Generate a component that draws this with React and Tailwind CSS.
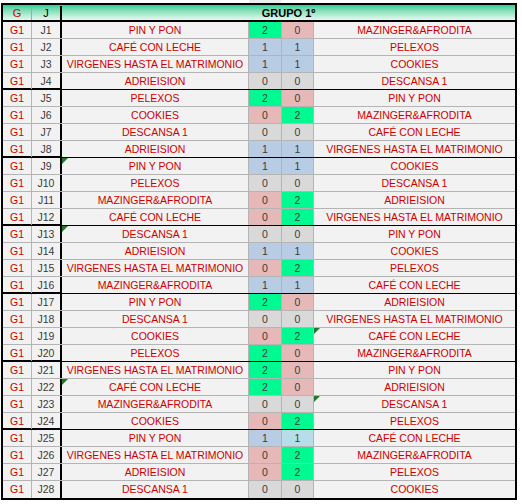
import React from "react";

const rows = [
  ["J1", "PIN Y PON", 2, 0, "MAZINGER&AFRODITA"],
  ["J2", "CAFÉ CON LECHE", 1, 1, "PELEXOS"],
  ["J3", "VIRGENES HASTA EL MATRIMONIO", 1, 1, "COOKIES"],
  ["J4", "ADRIEISION", 0, 0, "DESCANSA 1"],
  ["J5", "PELEXOS", 2, 0, "PIN Y PON"],
  ["J6", "COOKIES", 0, 2, "MAZINGER&AFRODITA"],
  ["J7", "DESCANSA 1", 0, 0, "CAFÉ CON LECHE"],
  ["J8", "ADRIEISION", 1, 1, "VIRGENES HASTA EL MATRIMONIO"],
  ["J9", "PIN Y PON", 1, 1, "COOKIES"],
  ["J10", "PELEXOS", 0, 0, "DESCANSA 1"],
  ["J11", "MAZINGER&AFRODITA", 0, 2, "ADRIEISION"],
  ["J12", "CAFÉ CON LECHE", 0, 2, "VIRGENES HASTA EL MATRIMONIO"],
  ["J13", "DESCANSA 1", 0, 0, "PIN Y PON"],
  ["J14", "ADRIEISION", 1, 1, "COOKIES"],
  ["J15", "VIRGENES HASTA EL MATRIMONIO", 0, 2, "PELEXOS"],
  ["J16", "MAZINGER&AFRODITA", 1, 1, "CAFÉ CON LECHE"],
  ["J17", "PIN Y PON", 2, 0, "ADRIEISION"],
  ["J18", "DESCANSA 1", 0, 0, "VIRGENES HASTA EL MATRIMONIO"],
  ["J19", "COOKIES", 0, 2, "CAFÉ CON LECHE"],
  ["J20", "PELEXOS", 2, 0, "MAZINGER&AFRODITA"],
  ["J21", "VIRGENES HASTA EL MATRIMONIO", 2, 0, "PIN Y PON"],
  ["J22", "CAFÉ CON LECHE", 2, 0, "ADRIEISION"],
  ["J23", "MAZINGER&AFRODITA", 0, 0, "DESCANSA 1"],
  ["J24", "COOKIES", 0, 2, "PELEXOS"],
  ["J25", "PIN Y PON", 1, 1, "CAFÉ CON LECHE"],
  ["J26", "VIRGENES HASTA EL MATRIMONIO", 0, 2, "MAZINGER&AFRODITA"],
  ["J27", "ADRIEISION", 0, 2, "PELEXOS"],
  ["J28", "DESCANSA 1", 0, 0, "COOKIES"],
];

const marks = { J9: "t1", J13: "t1", J19: "t2", J22: "t1", J23: "t2" };

function fills(j, a, b) {
  if (a > b) return ["bg-[#00fa92]", "bg-[#e6b8b7]"];
  if (a < b) return ["bg-[#e6b8b7]", "bg-[#00fa92]"];
  if (a === 1) return ["bg-[#b8cce4]", j === "J25" ? "bg-[#b7dee8]" : "bg-[#b8cce4]"];
  return ["bg-[#d9d9d9]", "bg-[#d9d9d9]"];
}

function Tri() {
  return (
    <span className="absolute left-0 top-0 h-0 w-0 border-t-[6px] border-r-[6px] border-t-[#1f7a2a] border-r-transparent" />
  );
}

export default function App() {
  return (
    <div
      className="h-[504px] w-[522px] bg-white text-[10.5px]"
      style={{ fontFamily: '"Liberation Sans", Arial, sans-serif' }}
    >
      <div className="flex h-[3px]">
        <div className="ml-[249px] w-[32px] bg-[#ececec]" />
      </div>
      <div className="ml-px w-[516px] border-2 border-black bg-[#f2f2f2]">
        {/* header */}
        <div className="flex h-[17px] border-b-2 border-black bg-gradient-to-b from-[#22cf98] to-[#e4f8f0] pt-px">
          <div className="flex w-[29px] items-center justify-center border-r border-[#a6a6a6] text-[11px] text-[#cc0000]">
            G
          </div>
          <div className="flex w-[30px] items-center justify-center border-r-2 border-black text-[11px] text-black">
            J
          </div>
          <div className="flex flex-1 items-center justify-center text-[11px] font-bold text-black">
            GRUPO 1º
          </div>
        </div>
        {rows.map(([j, t1, a, b, t2], i) => {
          const [f1, f2] = fills(j, a, b);
          const last = i === rows.length - 1;
          const groupEnd = (i + 1) % 4 === 0 && !last;
          const bb = last
            ? ""
            : groupEnd
            ? "border-b border-black"
            : "border-b border-[#b4b4b4]";
          const lead = groupEnd ? "shadow-[inset_0_-1px_0_#000]" : "";
          return (
            <div key={j} className={`flex h-[17px] ${bb}`}>
              <div
                className={`flex w-[29px] items-center justify-center border-r border-[#b4b4b4] pt-px text-[#cc0000] ${lead}`}
              >
                G1
              </div>
              <div
                className={`flex w-[30px] items-center justify-center border-r-2 border-black pt-px text-[#3a3a3a] ${lead}`}
              >
                {j}
              </div>
              <div className="relative flex w-[187px] items-center justify-center whitespace-nowrap border-r border-[#b4b4b4] pt-px text-[#cc0000]">
                {marks[j] === "t1" && <Tri />}
                {t1}
              </div>
              <div
                className={`flex w-[33px] items-center justify-center border-r border-[#b4b4b4] pt-px text-[#3a3a3a] ${f1}`}
              >
                {a}
              </div>
              <div
                className={`flex w-[32px] items-center justify-center border-r border-[#b4b4b4] pt-px text-[#3a3a3a] ${f2}`}
              >
                {b}
              </div>
              <div className="relative flex flex-1 items-center justify-center whitespace-nowrap pt-px text-[#cc0000]">
                {marks[j] === "t2" && <Tri />}
                {t2}
              </div>
            </div>
          );
        })}
      </div>
    </div>
  );
}
